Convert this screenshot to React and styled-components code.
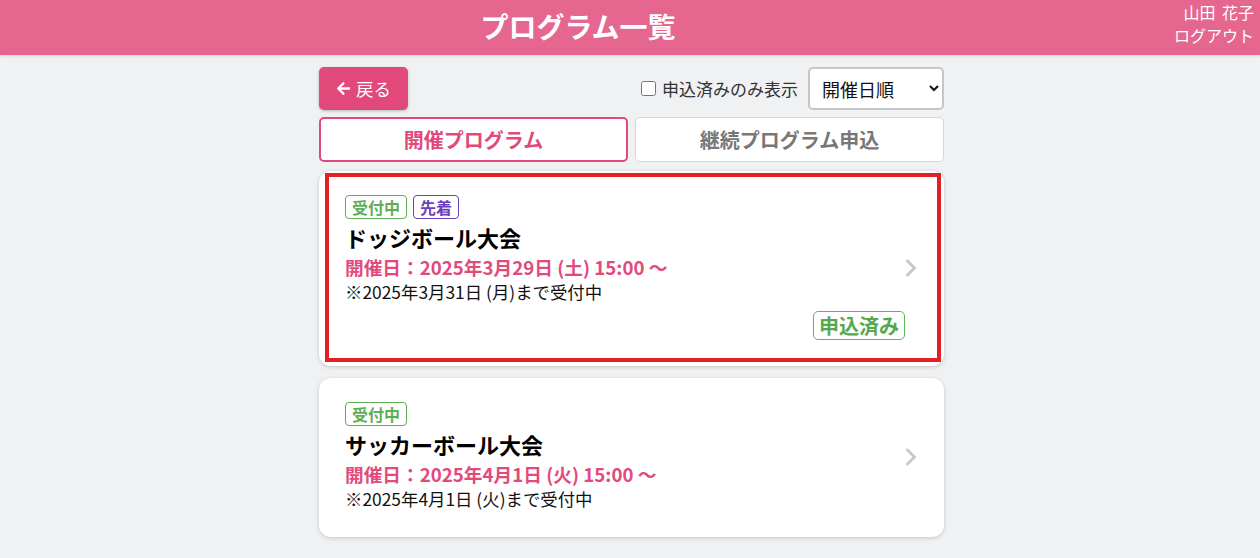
import React from "react";
import styled, { createGlobalStyle } from "styled-components";
import { FaArrowLeft } from "react-icons/fa";

const GlobalStyle = createGlobalStyle`
  html, body {
    margin: 0;
    padding: 0;
    background: #f0f1f3;
    font-family: "Noto Sans CJK JP", "Noto Sans", sans-serif;
    color: #111;
  }
  * { box-sizing: border-box; }
`;

const Header = styled.header`
  height: 55px;
  display: flex;
  background: #e5678f;
  color: #fff;
  box-shadow: 0 1px 3px rgba(0, 0, 0, 0.12);
`;

const HeaderTitle = styled.h1`
  flex: 1;
  margin: 0;
  text-align: center;
  font-size: 28px;
  font-weight: 700;
  line-height: 53px;
`;

const UserBox = styled.div`
  width: 104px;
  padding-right: 6px;
  text-align: right;
  font-size: 16px;
  line-height: 23px;
  padding-top: 1px;
  word-spacing: 3px;
`;

const Container = styled.main`
  width: 625px;
  margin-left: calc(50% - 311px);
  padding-bottom: 20px;
`;

const Toolbar = styled.div`
  margin-top: 12px;
  height: 43px;
  display: flex;
  justify-content: space-between;
  align-items: center;
`;

const BackButton = styled.button`
  width: 89px;
  height: 43px;
  padding: 0 0 0 17px;
  display: flex;
  align-items: center;
  gap: 5px;
  border: none;
  border-radius: 5px;
  background: #e0497a;
  color: #fff;
  font-family: inherit;
  font-size: 17.5px;
  box-shadow: 0 1px 3px rgba(0, 0, 0, 0.25);
`;

const Filters = styled.div`
  display: flex;
  align-items: center;
  gap: 10px;
`;

const CheckLabel = styled.label`
  display: flex;
  align-items: center;
  gap: 6px;
  font-size: 17px;
  color: #333;

  input {
    margin: 0;
    width: 15px;
    height: 15px;
  }
`;

const Select = styled.select`
  width: 136px;
  height: 43px;
  padding: 0 8px;
  border: 2px solid #c6c6c6;
  border-radius: 5px;
  background: #fff;
  font-family: inherit;
  font-size: 18px;
  color: #111;
`;

const Tabs = styled.div`
  margin-top: 7px;
  display: grid;
  grid-template-columns: 1fr 1fr;
  gap: 7px;
`;

const Tab = styled.button`
  height: 45px;
  border-radius: 5px;
  background: #fff;
  font-family: inherit;
  font-size: 20px;
  font-weight: 700;
  border: ${(p) => (p.$active ? "2px solid #e0497a" : "1px solid #d6d6d6")};
  color: ${(p) => (p.$active ? "#e0497a" : "#777")};
`;

const CardList = styled.div`
  margin-top: 9px;
  display: flex;
  flex-direction: column;
  gap: 12px;
`;

const Card = styled.div`
  position: relative;
  display: flex;
  align-items: center;
  padding: 24px 27px 26px 26px;
  background: #fff;
  border-radius: 12px;
  box-shadow: 0 1px 4px rgba(0, 0, 0, 0.18);
`;

const Highlight = styled.div`
  position: absolute;
  top: 2px;
  right: 3px;
  bottom: 4px;
  left: 6px;
  border: 4px solid #e31e24;
  pointer-events: none;
`;

const CardBody = styled.div`
  flex: 1;
  display: flex;
  flex-direction: column;
`;

const TagRow = styled.div`
  display: flex;
  gap: 6px;
`;

const Tag = styled.span`
  padding: 1px 6px;
  border: 1px solid ${(p) => p.$color};
  border-radius: 4px;
  color: ${(p) => p.$color};
  font-size: 16px;
  font-weight: 700;
  line-height: 20px;
`;

const CardTitle = styled.div`
  margin-top: 3px;
  font-size: 22px;
  font-weight: 700;
  line-height: 30px;
  color: #000;
`;

const EventDate = styled.div`
  margin-top: 2px;
  font-size: 18.7px;
  font-weight: 700;
  line-height: 26px;
  color: #e34a7c;
`;

const Deadline = styled.div`
  font-size: 17.4px;
  line-height: 24px;
  color: #111;
`;

const Applied = styled.span`
  align-self: flex-end;
  margin-top: 7px;
  padding: 1px 5px;
  border: 1px solid #62b35a;
  border-radius: 5px;
  color: #55a84c;
  font-size: 20px;
  font-weight: 700;
  line-height: 25px;
`;

const Chevron = () => (
  <svg width="12" height="18" viewBox="0 0 12 18">
    <path d="M2.5 2 L9.5 9 L2.5 16" fill="none" stroke="#c8c8c8" strokeWidth="3" strokeLinecap="round" strokeLinejoin="round" />
  </svg>
);

const programs = [
  {
    id: 1,
    tags: [
      { label: "受付中", color: "#5fae55" },
      { label: "先着", color: "#6a3fc0" },
    ],
    title: "ドッジボール大会",
    date: "開催日：2025年3月29日 (土) 15:00 〜",
    deadline: "※2025年3月31日 (月)まで受付中",
    applied: true,
    selected: true,
  },
  {
    id: 2,
    tags: [{ label: "受付中", color: "#5fae55" }],
    title: "サッカーボール大会",
    date: "開催日：2025年4月1日 (火) 15:00 〜",
    deadline: "※2025年4月1日 (火)まで受付中",
    applied: false,
    selected: false,
  },
];

const App = () => {
  return (
    <>
      <GlobalStyle />
      <Header>
        <HeaderTitle>プログラム一覧</HeaderTitle>
        <UserBox>
          <div>山田 花子</div>
          <div>ログアウト</div>
        </UserBox>
      </Header>

      <Container>
        <Toolbar>
          <BackButton>
            <FaArrowLeft size={15} />
            戻る
          </BackButton>
          <Filters>
            <CheckLabel>
              <input type="checkbox" />
              申込済みのみ表示
            </CheckLabel>
            <Select defaultValue="date">
              <option value="date">開催日順</option>
            </Select>
          </Filters>
        </Toolbar>

        <Tabs>
          <Tab $active>開催プログラム</Tab>
          <Tab>継続プログラム申込</Tab>
        </Tabs>

        <CardList>
          {programs.map((p) => (
            <Card key={p.id}>
              {p.selected && <Highlight />}
              <CardBody>
                <TagRow>
                  {p.tags.map((t) => (
                    <Tag key={t.label} $color={t.color}>{t.label}</Tag>
                  ))}
                </TagRow>
                <CardTitle>{p.title}</CardTitle>
                <EventDate>{p.date}</EventDate>
                <Deadline>{p.deadline}</Deadline>
                {p.applied && <Applied>申込済み</Applied>}
              </CardBody>
              <Chevron />
            </Card>
          ))}
        </CardList>
      </Container>
    </>
  );
};

export default App;
